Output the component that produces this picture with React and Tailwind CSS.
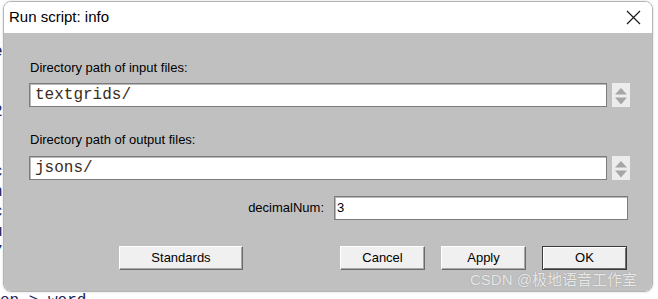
import React from 'react';

function Spinner() {
  return (
    <div className="w-[18px] h-[24px] bg-[#ececec] shrink-0">
      <svg width="18" height="24" viewBox="0 0 18 24">
        <path d="M3 11.5 L9 5 L15 11.5 Z" fill="#a6a6a6" />
        <path d="M3 14.5 L15 14.5 L9 21.5 Z" fill="#a6a6a6" />
      </svg>
    </div>
  );
}

function PathField({ value }) {
  return (
    <div className="flex items-center gap-[5px]">
      <div className="w-[578px] h-[24px] bg-white border border-[#7c7c7c] shadow-[inset_1px_1px_0_#b8b8b8] flex items-center pl-[5px] font-['Liberation_Mono','Courier_New',monospace] text-[16px] text-[#3a2c20]">
        {value}
      </div>
      <Spinner />
    </div>
  );
}

function Btn({ children, w, primary }) {
  return (
    <div
      className={`h-[24px] ${w} bg-[#f0f0f0] flex items-center justify-center text-[13px] text-black ${
        primary
          ? 'border border-[#3a3a3a] shadow-[inset_1px_1px_0_#ffffff,inset_-1px_-1px_0_#6e6e6e]'
          : 'border border-t-white border-l-white border-b-[#6a6a6a] border-r-[#6a6a6a] shadow-[inset_-1px_-1px_0_#a8a8a8]'
      }`}
    >
      {children}
    </div>
  );
}

export default function App() {
  const bgLines = ['e', '', '', '2', '', '', 'c', 'n', 'c', 'u', '7'];

  return (
    <div className="relative w-[658px] h-[299px] overflow-hidden bg-white font-['Liberation_Sans',Arial,sans-serif]">
      {/* page behind the dialog */}
      <div className="absolute inset-0 font-['Liberation_Mono','Courier_New',monospace] text-[16px] text-[#23235a]">
        <div className="flex flex-col pt-[42px] -ml-[7px] leading-[20px]">
          {bgLines.map((c, i) => (
            <span key={i} className="h-[20px]">{c}</span>
          ))}
        </div>
        <div className="absolute left-0 top-[291px] leading-[20px]">on &gt; word</div>
      </div>

      {/* dialog window */}
      <div className="absolute left-[3px] top-[1px] w-[650px] h-[291px] rounded-[8px] border border-[#b4b4b4] overflow-hidden flex flex-col shadow-[0_0_3px_rgba(0,0,0,0.15)]">
        <div className="h-[31px] bg-white flex items-center justify-between pl-[5px] pr-[11px] shrink-0">
          <span className="text-[15px] text-black">Run script: info</span>
          <svg width="15" height="15" viewBox="0 0 15 15">
            <path d="M1 1 L14 14 M14 1 L1 14" stroke="#1a1a1a" strokeWidth="1.2" />
          </svg>
        </div>

        <div className="flex-1 bg-[#c0c0c0] pt-[27px] pl-[25px] flex flex-col">
          <div className="text-[13px] leading-[16px] text-black ml-[1px]">Directory path of input files:</div>
          <div className="mt-[7px]">
            <PathField value="textgrids/" />
          </div>

          <div className="text-[13px] leading-[16px] text-black ml-[1px] mt-[25px]">Directory path of output files:</div>
          <div className="mt-[8px]">
            <PathField value="jsons/" />
          </div>

          <div className="w-[599px] mt-[16px] flex items-center justify-end gap-[10px]">
            <span className="text-[13px] text-black">decimalNum:</span>
            <div className="w-[294px] h-[24px] bg-white border border-[#7c7c7c] shadow-[inset_1px_1px_0_#b8b8b8] flex items-center pl-[2px] text-[13px] text-black">
              3
            </div>
          </div>

          <div className="w-[599px] mt-[26px] flex items-center">
            <div className="ml-[90px]">
              <Btn w="w-[124px]">Standards</Btn>
            </div>
            <div className="ml-[97px] flex gap-[16px]">
              <Btn w="w-[85px]">Cancel</Btn>
              <Btn w="w-[85px]">Apply</Btn>
              <Btn w="w-[85px]" primary>OK</Btn>
            </div>
          </div>
        </div>
      </div>

      {/* watermark */}
      <div className="absolute left-[470px] top-[270px] text-[15px] leading-[20px] text-white/80 [text-shadow:0_0_1px_rgba(90,90,90,0.6)] font-['Liberation_Sans','Noto_Sans_CJK_SC',sans-serif]">
        CSDN @极地语音工作室
      </div>
    </div>
  );
}
